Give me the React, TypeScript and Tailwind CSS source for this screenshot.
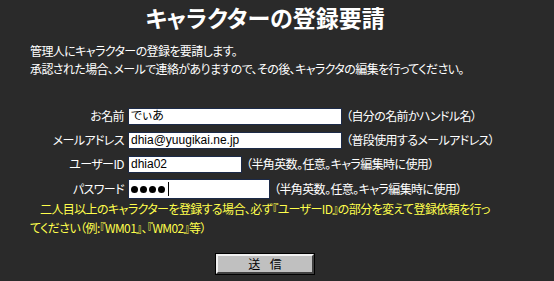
import React from "react";

const jp = "font-['MS_PGothic','Noto_Sans_CJK_JP',sans-serif] [font-feature-settings:'palt']";

function Row({ label, value, width, note, h = "h-[17px]", password = false }: { label: string; value: string; width: string; note: string; h?: string; password?: boolean }) {
    return (
        <div className="flex items-center">
            <div className="w-[128px] pr-[4px] text-right">{label}</div>
            <div className={`${width} ${h} flex items-center bg-white border border-[#1c2a48] px-[2px] text-black font-['Liberation_Sans','Noto_Sans_CJK_JP',sans-serif] text-[12px] tracking-normal`}>
                {password ? (
                    <span className="flex items-center gap-[2px]">
                        <span className="w-[7px] h-[7px] rounded-full bg-black" />
                        <span className="w-[7px] h-[7px] rounded-full bg-black" />
                        <span className="w-[7px] h-[7px] rounded-full bg-black" />
                        <span className="w-[7px] h-[7px] rounded-full bg-black" />
                        <span className="w-px h-[14px] bg-black ml-[1px]" />
                    </span>
                ) : (
                    value
                )}
            </div>
            <div className="pl-[4px]">{note}</div>
        </div>
    );
}

export default function App() {
    return (
        <div className={`w-[554px] h-[281px] bg-[#2a2a2a] text-white text-[12px] tracking-[-0.6px] ${jp}`}>
            <h1 className="pt-[2px] text-center text-[23px] leading-[30px] font-bold pr-[24px] tracking-normal">キャラクターの登録要請</h1>

            <div className="mt-[10px] pl-[30px] leading-[18px]">
                <p>管理人にキャラクターの登録を要請します。</p>
                <p>承認された場合、メールで連絡がありますので、その後、キャラクタの編集を行ってください。</p>
            </div>

            <div className="mt-[29px] flex flex-col gap-[6px]">
                <Row label="お名前" value="でぃあ" width="w-[214px]" note="（自分の名前かハンドル名）" />
                <Row label="メールアドレス" value="dhia@yuugikai.ne.jp" width="w-[214px]" note="（普段使用するメールアドレス）" />
                <Row label="ユーザーID" value="dhia02" width="w-[114px]" note="（半角英数。任意。キャラ編集時に使用）" />
                <Row label="パスワード" value="" width="w-[142px]" h="h-[20px]" note="（半角英数。任意。キャラ編集時に使用）" password />
            </div>

            <p className="mt-0 pl-[30px] text-[#ffff4c] leading-[19px]">
                <span className="pl-[10px]">二人目以上のキャラクターを登録する場合、必ず『ユーザーID』の部分を変えて登録依頼を行っ</span>
                <br />
                てください（例:『WM01』、『WM02』等）
            </p>

            <div className="mt-[17px] pl-[216px]">
                <button className="w-[98px] h-[20px] bg-[#c0c0c0] text-black text-[12px] leading-none border-2 border-t-[#f0f0f0] border-l-[#f0f0f0] border-r-[#404040] border-b-[#404040] outline outline-1 outline-black tracking-[0.8em] pl-[0.8em]">
                    送信
                </button>
            </div>
        </div>
    );
}
